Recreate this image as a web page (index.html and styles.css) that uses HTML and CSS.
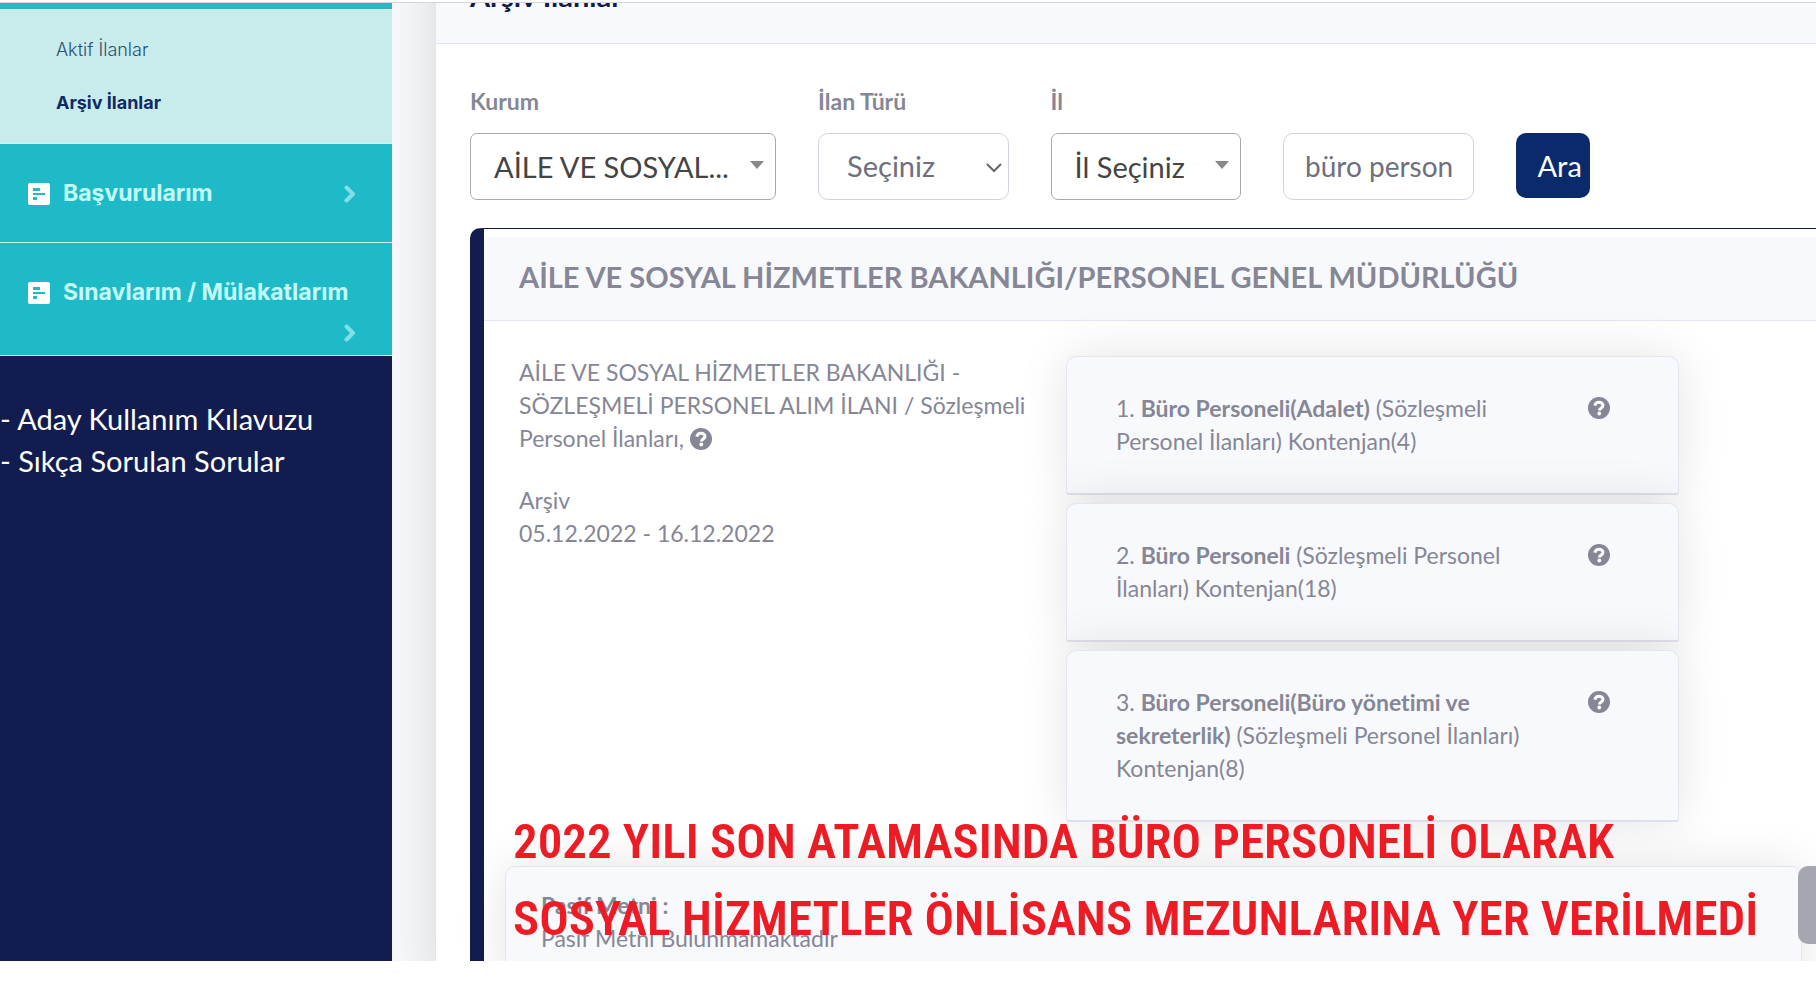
FILE: index.html
```html
<!DOCTYPE html>
<html lang="tr">
<head>
  <meta charset="UTF-8" />
  <meta name="viewport" content="width=device-width, initial-scale=1.0"/>
  <title>Arşiv İlanlar</title>
  <link rel="stylesheet" href="styles.css">
</head>
<body>

  <svg class="sprite" width="0" height="0" aria-hidden="true">
    <symbol id="icon-form" viewBox="0 0 22 22">
      <path fill="#fff" fill-rule="evenodd" d="M2 0h18a2 2 0 0 1 2 2v18a2 2 0 0 1-2 2H2a2 2 0 0 1-2-2V2a2 2 0 0 1 2-2zM5 5v3h7V5zM5 10v2h12v-2zM5 14v3h4v-3z"/>
    </symbol>
    <symbol id="icon-chevron" viewBox="0 0 12 18">
      <path fill="none" stroke="currentColor" stroke-width="4" stroke-linecap="round" stroke-linejoin="round" d="M2.500 2.500L9 9l-6.500 6.500"/>
    </symbol>
    <symbol id="icon-help" viewBox="0 0 22 22">
      <circle cx="11" cy="11" r="11" fill="currentColor"/>
      <path fill="none" stroke="#fff" stroke-width="3" d="M6.800 8.600C7.500 6.200 9 5.300 11 5.300c2.300 0 4 1.300 4 3.200 0 2.500-3.600 2.500-3.600 5"/>
      <circle cx="11.300" cy="16.500" r="1.900" fill="#fff"/>
    </symbol>
  </svg>

  <div class="topline"></div>
  <div class="page">
    <aside class="sidebar">
      <nav>
        <ul class="submenu">
          <li><a href="#">Aktif İlanlar</a></li>
          <li><a href="#" class="active">Arşiv İlanlar</a></li>
        </ul>
        <a href="#" class="menu-item">
          <svg class="menu-icon"><use href="#icon-form"/></svg>
          <span>Başvurularım</span>
          <svg class="chevron"><use href="#icon-chevron"/></svg>
        </a>
        <a href="#" class="menu-item wrapped">
          <svg class="menu-icon"><use href="#icon-form"/></svg>
          <span>Sınavlarım / Mülakatlarım</span>
          <svg class="chevron"><use href="#icon-chevron"/></svg>
        </a>
      </nav>
      <div class="help-links">
        <a href="#">- Aday Kullanım Kılavuzu</a>
        <a href="#">- Sıkça Sorulan Sorular</a>
      </div>
    </aside>

    <main class="main">
      <section class="card">
        <h1 class="card-header">Arşiv İlanlar</h1>
        <div class="card-body">
          <form class="filters">
            <div class="field">
              <label for="kurum">Kurum</label>
              <div class="select-box">
                <select id="kurum" class="dark"><option>AİLE VE SOSYAL...</option></select>
                <svg class="caret" viewBox="0 0 14 8"><path fill="#888" d="M0 0h14L7 8z"/></svg>
              </div>
            </div>
            <div class="field">
              <label for="tur">İlan Türü</label>
              <div class="select-box">
                <select id="tur"><option>Seçiniz</option></select>
                <svg class="caret angle" viewBox="0 0 16 10"><path fill="none" stroke="#666" stroke-width="2" d="M1 1l7 7 7-7"/></svg>
              </div>
            </div>
            <div class="field">
              <label for="il">İl</label>
              <div class="select-box">
                <select id="il" class="dark"><option>İl Seçiniz</option></select>
                <svg class="caret" viewBox="0 0 14 8"><path fill="#888" d="M0 0h14L7 8z"/></svg>
              </div>
            </div>
            <div class="field">
              <input type="text" value="büro personeli" aria-label="Arama">
            </div>
            <div class="field">
              <button type="button" class="search-btn">Ara</button>
            </div>
          </form>

          <article class="result">
            <h2 class="result-header">AİLE VE SOSYAL HİZMETLER BAKANLIĞI/PERSONEL GENEL MÜDÜRLÜĞÜ</h2>
            <div class="result-body">
              <div class="summary">
                <p>AİLE VE SOSYAL HİZMETLER BAKANLIĞI -<br>SÖZLEŞMELİ PERSONEL ALIM İLANI / Sözleşmeli<br>Personel İlanları, <svg class="help"><use href="#icon-help"/></svg></p>
                <p>Arşiv<br>05.12.2022 - 16.12.2022</p>
              </div>
              <div class="positions">
                <div class="position">
                  <p>1. <b>Büro Personeli(Adalet)</b> (Sözleşmeli<br>Personel İlanları) Kontenjan(4)</p>
                  <svg class="help"><use href="#icon-help"/></svg>
                </div>
                <div class="position">
                  <p>2. <b>Büro Personeli</b> (Sözleşmeli Personel<br>İlanları) Kontenjan(18)</p>
                  <svg class="help"><use href="#icon-help"/></svg>
                </div>
                <div class="position">
                  <p>3. <b>Büro Personeli(Büro yönetimi ve<br>sekreterlik)</b> (Sözleşmeli Personel İlanları)<br>Kontenjan(8)</p>
                  <svg class="help"><use href="#icon-help"/></svg>
                </div>
              </div>
            </div>
            <div class="passive">
              <b>Pasif Metni :</b>
              <p>Pasif Metni Bulunmamaktadır</p>
            </div>
          </article>
        </div>
      </section>
    </main>

    <p class="caption">2022 YILI SON ATAMASINDA BÜRO PERSONELİ OLARAK<br>SOSYAL HİZMETLER ÖNLİSANS MEZUNLARINA YER VERİLMEDİ</p>
    <button type="button" class="scroll-top" aria-label="Yukarı"></button>
  </div>
</body>
</html>
```
FILE: styles.css
```css
* {
  margin: 0;
  padding: 0;
  box-sizing: border-box;
}

body {
  height: 100vh;
  display: flex;
  flex-direction: column;
  overflow: hidden;
  background: #fff;
  color: #858796;
  font-family: Lato, "Noto Sans", sans-serif;
  font-size: 23px;
  line-height: 33px;
  font-variant-ligatures: none;
}

a {
  text-decoration: none;
}

.sprite {
  position: absolute;
}

.topline {
  height: 3px;
  flex-shrink: 0;
  border-bottom: 1px solid #d5d6da;
}

.page {
  flex: 1;
  min-height: 0;
  display: flex;
  position: relative;
  overflow: hidden;
  margin-bottom: 23px;
  background: #f6f8fc;
}

/* sidebar */
.sidebar {
  width: 392px;
  flex-shrink: 0;
  background: #131c4e;
  position: relative;
  z-index: 1;
}

.submenu {
  list-style: none;
  background: #c8ebec;
  border-top: 6px solid #2bb6c1;
  padding: 14px 56px;
  font-family: Inter, sans-serif;
  font-size: 18px;
}

.submenu li {
  padding: 10px 0;
}

.submenu a {
  display: block;
  color: #2d4f76;
  font-weight: 300;
}

.submenu a.active {
  color: #0f2a63;
  font-weight: 700;
}

.menu-item {
  display: flex;
  align-items: center;
  flex-wrap: wrap;
  column-gap: 13px;
  padding: 33px 36px 32px 28px;
  background: #1fbac7;
  border-top: 1px solid #c8f3f3;
  color: #c3fafb;
  font-family: Inter, sans-serif;
  font-size: 23px;
  font-weight: 700;
}

.menu-item.wrapped {
  padding-bottom: 13px;
  border-bottom: 1px solid #c8f3f3;
}

.menu-icon {
  width: 22px;
  height: 22px;
}

.chevron {
  width: 12px;
  height: 18px;
  margin-left: auto;
  color: #83dfe6;
}

.wrapped .chevron {
  margin-top: 15px;
}

.help-links {
  padding-top: 42px;
  font-size: 29px;
  line-height: 42px;
}

.help-links a {
  display: block;
  color: #fff;
}

/* content */
.main {
  flex: 1;
  min-width: 0;
  padding-left: 43px;
}

.card {
  margin-top: -63px;
  min-height: 100vh;
  background: #fff;
  border-left: 1px solid #e3e6f0;
  box-shadow: 0 0 50px rgba(0, 0, 0, 0.13);
}

.card-header {
  padding: 39px 34px 31px;
  background: #f8f9fc;
  border-bottom: 1px solid #e3e6f0;
  color: #131c4e;
  font-size: 29px;
  font-weight: 700;
}

.card-body {
  padding: 41px 0 0 34px;
}

.filters {
  display: grid;
  grid-template-columns: 45fr 28fr 28fr 28fr 11fr 27fr;
  column-gap: 42px;
  align-items: end;
}

.field label {
  display: block;
  margin-bottom: 15px;
  font-weight: 700;
}

.select-box {
  position: relative;
}

.field select,
.field input {
  display: block;
  width: 100%;
  height: 67px;
  padding: 0 21px;
  appearance: none;
  background: #fff;
  border: 1px solid #d1d3e2;
  border-radius: 10px;
  color: #6e707e;
  font-family: inherit;
  font-size: 29px;
}

.field select {
  padding: 0 28px 2px;
}

.field select.dark {
  padding: 0 23px;
  border-color: #aaa;
  border-radius: 7px;
  color: #444;
}

.field input {
  padding-bottom: 2px;
  font-size: 28px;
}

.caret {
  position: absolute;
  right: 12px;
  top: 28px;
  width: 14px;
  height: 8px;
}

.caret.angle {
  right: 7px;
  top: 30px;
  width: 16px;
  height: 10px;
}

.search-btn {
  width: 100%;
  height: 65px;
  margin-bottom: 2px;
  padding-left: 22px;
  display: block;
  background: #0a2a6b;
  border: none;
  border-radius: 10px;
  color: #fff;
  font-family: inherit;
  font-size: 29px;
  text-align: left;
}

.result {
  margin-top: 28px;
  padding-top: 8px;
  border-top: 1px solid #131c3a;
  border-left: 14px solid #131c4e;
  border-radius: 10px 0 0 0;
}

.result-header {
  padding: 19px 35px 22px;
  background: #f8f9fc;
  border-bottom: 1px solid #e3e6f0;
  font-size: 29px;
  font-weight: 700;
  line-height: 42px;
}

.result-body {
  display: grid;
  grid-template-columns: 547fr 613fr 137fr;
  padding: 35px 0 0 35px;
}

.summary p {
  margin-bottom: 29px;
}

.help {
  width: 22px;
  height: 22px;
  flex-shrink: 0;
  vertical-align: -3px;
}

.position {
  display: flex;
  justify-content: space-between;
  margin-bottom: 8px;
  padding: 35px 68px 35px 49px;
  background: #f8f9fc;
  border: 1px solid #e3e6f0;
  border-bottom: 2px solid #dddfe9;
  border-radius: 10px 10px 3px 3px;
  box-shadow: 0 0 50px rgba(0, 0, 0, 0.11);
}

.position .help {
  margin-top: 5px;
}

.passive {
  margin: 36px 14px 0 21px;
  padding: 22px 35px 35px;
  background: #f8f9fc;
  border: 1px solid #e3e6f0;
  border-radius: 10px;
  box-shadow: 0 0 50px rgba(0, 0, 0, 0.11);
}

/* red note lying over the page */
.caption {
  position: absolute;
  left: 513px;
  bottom: 4px;
  color: #ed1c24;
  font-family: "Roboto Condensed", "Liberation Sans Narrow", sans-serif;
  font-size: 49px;
  font-weight: 600;
  line-height: 77px;
  white-space: nowrap;
}

.scroll-top {
  position: absolute;
  right: 0;
  bottom: 17px;
  width: 18px;
  height: 78px;
  background: #a5a6af;
  border: none;
  border-radius: 10px 0 0 10px;
}
```
